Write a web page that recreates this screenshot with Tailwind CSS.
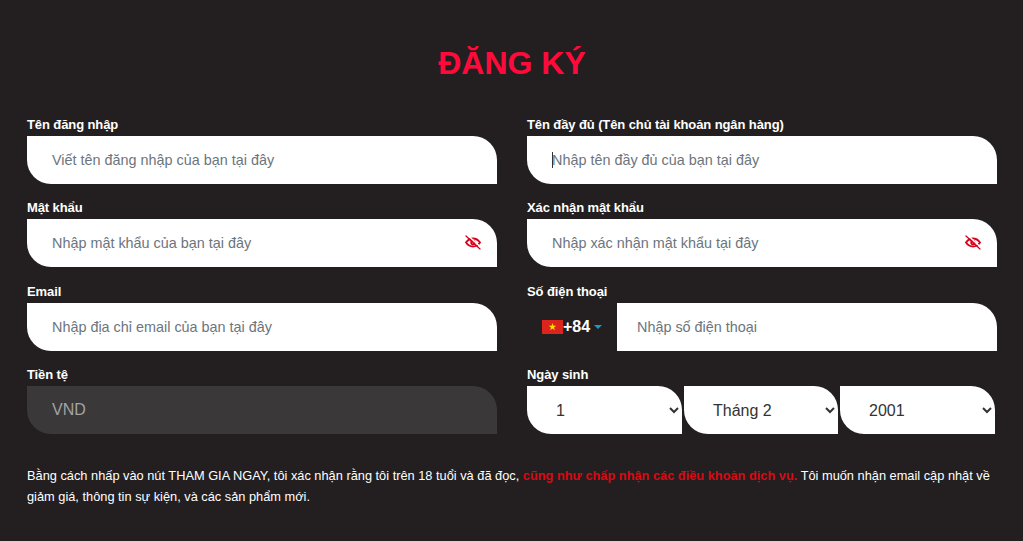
<!DOCTYPE html>
<html lang="vi">
<head>
<meta charset="utf-8">
<title>Đăng ký</title>
<script src="https://cdn.jsdelivr.net/npm/@tailwindcss/browser@4"></script>
</head>
<body class="bg-[#231f20] h-[541px] overflow-hidden font-['Liberation_Sans',Arial,sans-serif] text-white">
  <div class="pl-[27px] pr-[26px] pt-[42px]">
    <h1 class="text-[32px] leading-[42px] font-bold text-center text-[#ff0a3a]">ĐĂNG KÝ</h1>

    <form class="mt-[30.75px]">
      <div class="grid grid-cols-[470px_470px] gap-x-[30px] gap-y-[14.5px]">

        <div>
          <label class="block mb-px text-[13px] leading-[20px] font-bold tracking-[-0.1px]">Tên đăng nhập</label>
          <input type="text" placeholder="Viết tên đăng nhập của bạn tại đây" class="block w-full h-12 pl-[25px] pr-4 bg-white rounded-tr-3xl rounded-bl-3xl text-[14.4px] text-gray-800 placeholder:text-[#6c757d] outline-none">
        </div>
        <div>
          <label class="block mb-px text-[13px] leading-[20px] font-bold tracking-[-0.1px]">Tên đầy đủ (Tên chủ tài khoản ngân hàng)</label>
          <div class="relative">
            <input type="text" placeholder="Nhập tên đầy đủ của bạn tại đây" class="block w-full h-12 pl-[25px] pr-4 bg-white rounded-tr-3xl rounded-bl-3xl text-[14.4px] text-gray-800 placeholder:text-[#6c757d] outline-none">
            <span class="absolute left-[25px] top-4 w-px h-4 bg-[#333]"></span>
          </div>
        </div>

        <div>
          <label class="block mb-px text-[13px] leading-[20px] font-bold tracking-[-0.1px]">Mật khẩu</label>
          <div class="relative">
            <input type="password" placeholder="Nhập mật khẩu của bạn tại đây" class="block w-full h-12 pl-[25px] pr-10 bg-white rounded-tr-3xl rounded-bl-3xl text-[14.4px] text-gray-800 placeholder:text-[#6c757d] outline-none">
            <svg class="absolute right-4 top-4 w-4 h-4 text-[#d9001b]" viewBox="0 0 16 16" fill="none" stroke="currentColor" stroke-linecap="round">
              <path stroke-width="1.800" d="M1 7.500c1.800-2.600 4.200-4 7-4s5.200 1.400 7 4c-1.800 2.600-4.200 4-7 4s-5.200-1.400-7-4z"/>
              <circle stroke-width="1.800" cx="8" cy="7.500" r="1.800"/>
              <path stroke="#fff" stroke-width="1.500" d="M3 .5l13 12"/>
              <path stroke-width="1.300" d="M1 1l14 13"/>
            </svg>
          </div>
        </div>
        <div>
          <label class="block mb-px text-[13px] leading-[20px] font-bold tracking-[-0.1px]">Xác nhận mật khẩu</label>
          <div class="relative">
            <input type="password" placeholder="Nhập xác nhận mật khẩu tại đây" class="block w-full h-12 pl-[25px] pr-10 bg-white rounded-tr-3xl rounded-bl-3xl text-[14.4px] text-gray-800 placeholder:text-[#6c757d] outline-none">
            <svg class="absolute right-4 top-4 w-4 h-4 text-[#d9001b]" viewBox="0 0 16 16" fill="none" stroke="currentColor" stroke-linecap="round">
              <path stroke-width="1.800" d="M1 7.500c1.800-2.600 4.200-4 7-4s5.200 1.400 7 4c-1.800 2.600-4.200 4-7 4s-5.200-1.400-7-4z"/>
              <circle stroke-width="1.800" cx="8" cy="7.500" r="1.800"/>
              <path stroke="#fff" stroke-width="1.500" d="M3 .5l13 12"/>
              <path stroke-width="1.300" d="M1 1l14 13"/>
            </svg>
          </div>
        </div>

        <div>
          <label class="block mb-px text-[13px] leading-[20px] font-bold tracking-[-0.1px]">Email</label>
          <input type="email" placeholder="Nhập địa chỉ email của bạn tại đây" class="block w-full h-12 pl-[25px] pr-4 bg-white rounded-tr-3xl rounded-bl-3xl text-[14.4px] text-gray-800 placeholder:text-[#6c757d] outline-none">
        </div>
        <div>
          <label class="block mb-px text-[13px] leading-[20px] font-bold tracking-[-0.1px]">Số điện thoại</label>
          <div class="flex h-12">
            <div class="w-[90px] shrink-0 flex items-center pl-[15px]">
              <svg class="w-[21px] h-[14px] shrink-0" viewBox="0 0 21 14">
                <rect width="21" height="14" fill="#da251d"/>
                <path d="M10.500 3l.9 2.800h2.900l-2.350 1.700.9 2.800-2.350-1.700-2.350 1.700.9-2.800-2.350-1.700h2.900z" fill="#ffde00"/>
              </svg>
              <span class="text-base leading-none font-bold">+84</span>
              <span class="ml-[4px] mt-[1px] w-0 h-0 border-x-[4px] border-x-transparent border-t-[4px] border-t-[#1a9bc7]"></span>
            </div>
            <input type="tel" placeholder="Nhập số điện thoại" class="block flex-1 min-w-0 h-12 pl-5 pr-4 bg-white rounded-tr-3xl text-[14.4px] text-gray-800 placeholder:text-[#6c757d] outline-none">
          </div>
        </div>

        <div>
          <label class="block mb-px text-[13px] leading-[20px] font-bold tracking-[-0.1px]">Tiền tệ</label>
          <input type="text" value="VND" disabled class="block w-full h-12 pl-[25px] pr-4 bg-[#3a3839] rounded-tr-3xl rounded-bl-3xl text-base text-[#a3a3a3] outline-none">
        </div>
        <div>
          <label class="block mb-px text-[13px] leading-[20px] font-bold tracking-[-0.1px]">Ngày sinh</label>
          <div class="flex gap-[2px]">
            <select class="w-[155px] h-12 pl-[25px] pr-1 bg-white rounded-tr-3xl rounded-bl-3xl text-base text-[#333] outline-none">
              <option>1</option>
            </select>
            <select class="w-[154px] h-12 pl-[25px] pr-1 bg-white rounded-tr-3xl rounded-bl-3xl text-base text-[#333] outline-none">
              <option>Tháng 2</option>
            </select>
            <select class="w-[155px] h-12 pl-[25px] pr-1 bg-white rounded-tr-3xl rounded-bl-3xl text-base text-[#333] outline-none">
              <option>2001</option>
            </select>
          </div>
        </div>
      </div>

      <p class="mt-[30.5px] text-[12.8px] leading-[21px]">
        Bằng cách nhấp vào nút THAM GIA NGAY, tôi xác nhận rằng tôi trên 18 tuổi và đã đọc, <a class="font-bold text-[#d90a14]">cũng như chấp nhận các điều khoản dịch vụ.</a> Tôi muốn nhận email cập nhật về giảm giá, thông tin sự kiện, và các sản phẩm mới.
      </p>
    </form>
  </div>
</body>
</html>
